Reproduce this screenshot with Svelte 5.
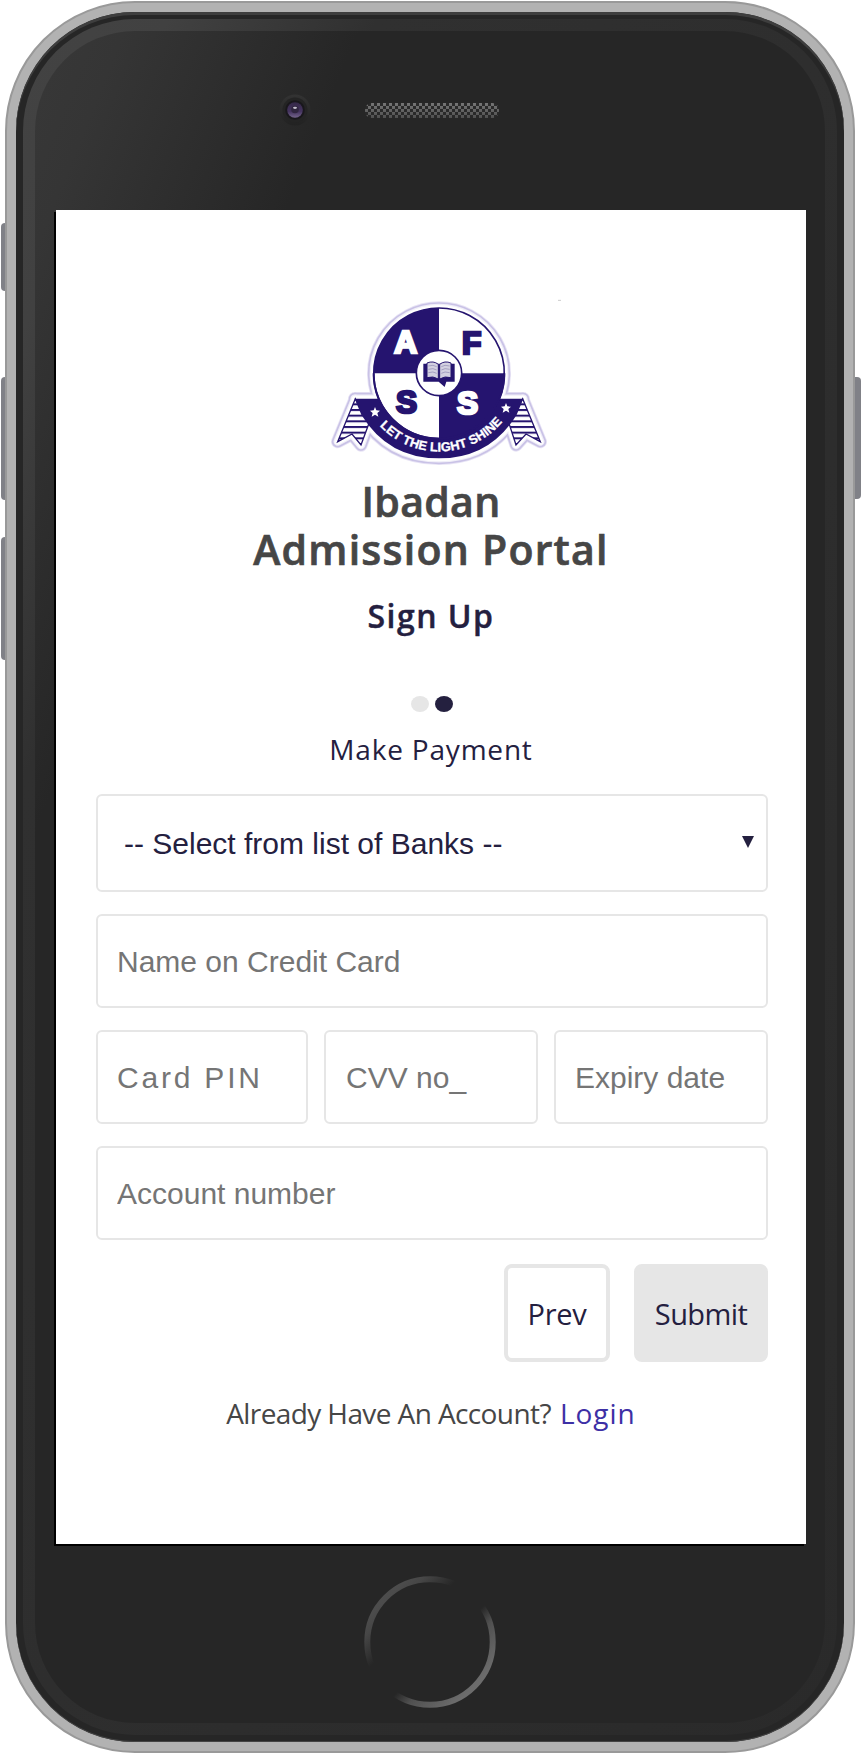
<script>
  const banks = ['-- Select from list of Banks --'];
  const sideKeys = [
    { side: 'left', top: 223, height: 68 },
    { side: 'left', top: 377, height: 123 },
    { side: 'left', top: 537, height: 123 },
    { side: 'right', top: 377, height: 122 }
  ];
</script>

<div class="device">
  {#each sideKeys as key}
    <span class="key {key.side}" style="top:{key.top}px;height:{key.height}px"></span>
  {/each}
  <div class="case">
    <div class="rim">
      <div class="ring">
        <div class="face">
          <div class="top-bar">
            <svg width="32" height="32" viewBox="0 0 32 32" class="camera">
              <defs>
                <linearGradient id="cam" x1="0" y1="0" x2="0" y2="1">
                  <stop offset="0" stop-color="#333" />
                  <stop offset="1" stop-color="#222" />
                </linearGradient>
                <linearGradient id="lens" x1="0" y1="0" x2="0" y2="1">
                  <stop offset="0" stop-color="#352848" />
                  <stop offset="0.6" stop-color="#45345f" />
                  <stop offset="1" stop-color="#75658c" />
                </linearGradient>
              </defs>
              <circle cx="16" cy="16" r="15.5" fill="url(#cam)" />
              <circle cx="16" cy="16" r="12.5" fill="#242424" />
              <circle cx="16" cy="16" r="9.8" fill="#19171c" />
              <circle cx="16" cy="16" r="7.8" fill="url(#lens)" />
              <circle cx="16" cy="15.5" r="3.8" fill="#30263f" />
              <ellipse cx="16" cy="13.8" rx="2" ry="1.1" fill="#c5bfcd" />
            </svg>
            <svg width="134" height="15" viewBox="0 0 134 15" class="speaker">
              <defs>
                <pattern id="mesh" width="6" height="6" patternUnits="userSpaceOnUse">
                  <rect width="6" height="6" fill="#2b2b2b" />
                  <rect width="3" height="3" fill="#7a7a7a" />
                  <rect x="3" y="3" width="3" height="3" fill="#7a7a7a" />
                </pattern>
                <linearGradient id="meshFade" x1="0" y1="0" x2="0" y2="1">
                  <stop offset="0" stop-color="#262626" stop-opacity="0.05" />
                  <stop offset="1" stop-color="#262626" stop-opacity="0.5" />
                </linearGradient>
              </defs>
              <rect width="134" height="15" rx="7" fill="url(#mesh)" />
              <rect width="134" height="15" rx="7" fill="url(#meshFade)" />
            </svg>
          </div>

          <main class="screen">
            <svg class="logo" width="240" height="180" viewBox="0 0 720 540">
              <defs>
                <path id="disc" d="M357 54a196 196 0 1 0 0.1 0z" />
                <path id="band" d="M104 326H190Q240 440 357 446Q474 440 524 326H610L590 374Q510 505 357 505Q204 505 124 374z" />
                <path id="tailL" d="M106 326L53 455L96 432L123 465L147 400z" />
                <path id="tailR" d="M608 326L661 455L618 432L588 465L567 400z" />
                <path id="motto" d="M131 337A247 247 0 0 0 583 337" />
                <pattern id="stripes" width="20" height="17" patternUnits="userSpaceOnUse">
                  <rect width="20" height="17" fill="#fff" />
                  <rect width="20" height="6" fill="#25146f" />
                </pattern>
                <g id="outline">
                  <use href="#disc" /><use href="#band" /><use href="#tailL" /><use href="#tailR" />
                </g>
                <path id="star" d="M0-15L4-5L15-4L7 3L10 14L0 8L-10 14L-7 3L-15-4L-4-5z" />
              </defs>
              <use href="#outline" fill="none" stroke="#e8e4f5" stroke-width="40" stroke-linejoin="round" />
              <use href="#outline" fill="none" stroke="#c9c2e6" stroke-width="35" stroke-linejoin="round" />
              <use href="#outline" fill="#f0eef8" stroke="#f0eef8" stroke-width="25" stroke-linejoin="round" />
              <use href="#outline" fill="#fff" stroke="#fff" stroke-width="18" stroke-linejoin="round" />
              <use href="#tailL" fill="url(#stripes)" stroke="#25146f" stroke-width="4" />
              <use href="#tailR" fill="url(#stripes)" stroke="#25146f" stroke-width="4" />
              <use href="#band" fill="#25146f" />
              <use href="#disc" fill="#fff" stroke="#25146f" stroke-width="5" />
              <path d="M357 250V54A196 196 0 0 0 161 250z" fill="#25146f" />
              <path d="M357 250V446A196 196 0 0 0 553 250z" fill="#25146f" />
              <path d="M161 250A196 196 0 0 0 553 250" fill="none" stroke="#25146f" stroke-width="6" />
              <g class="letters">
                <text x="257" y="189" fill="#fff" stroke="#fff">A</text>
                <text x="455" y="192" fill="#25146f" stroke="#25146f">F</text>
                <text x="260" y="369" fill="#25146f" stroke="#25146f">S</text>
                <text x="443" y="372" fill="#fff" stroke="#fff">S</text>
              </g>
              <circle cx="357" cy="249" r="68" fill="#fff" stroke="#25146f" stroke-width="5" />
              <path d="M310 221H404V275H379L374 291L356 275H310z" fill="#25146f" />
              <path d="M321 219Q340 211 355 223V267Q339 257 321 263zM393 219Q374 211 359 223V267Q375 257 393 263z" fill="#d3d0e0" stroke="#25146f" stroke-width="3" />
              <path d="M325 228Q340 223 350 230M325 238Q340 233 350 240M325 248Q340 243 350 250M389 228Q374 223 364 230M389 238Q374 233 364 240M389 248Q374 243 364 250" fill="none" stroke="#8d87b0" stroke-width="2" />
              <use href="#star" x="165" y="366" fill="#fff" />
              <use href="#star" x="558" y="354" fill="#fff" />
              <text class="motto"><textPath href="#motto" startOffset="51.5%" text-anchor="middle" textLength="416">LET THE LIGHT SHINE</textPath></text>
              <path d="M714 31H723" stroke="#ccc" stroke-width="3" />
            </svg>

            <h1>Ibadan<br /><span>Admission Portal</span></h1>
            <h2>Sign Up</h2>
            <div class="steps"><i></i><i class="active"></i></div>
            <h3>Make Payment</h3>

            <form onsubmit={(e) => e.preventDefault()}>
              <div class="bank">
                <select aria-label="Bank">
                  {#each banks as bank}<option>{bank}</option>{/each}
                </select>
                <svg width="12" height="12" viewBox="0 0 12 12"><path d="M0 0H12L6 12z" fill="#24203f" /></svg>
              </div>
              <input placeholder="Name on Credit Card" />
              <div class="card-row">
                <input class="pin" placeholder="Card PIN" />
                <input class="cvv" placeholder="CVV no_" />
                <input placeholder="Expiry date" />
              </div>
              <input placeholder="Account number" />
              <div class="actions">
                <button type="button" class="prev">Prev</button>
                <button class="submit">Submit</button>
              </div>
            </form>
            <p><span>Already Have An Account?</span><a href="#login">Login</a></p>
          </main>

          <div class="bottom-bar">
            <svg width="132" height="132" viewBox="0 0 132 132">
              <defs>
                <linearGradient id="home" x1="0" y1="0" x2="1" y2="1">
                  <stop offset="0.15" stop-color="#4c4c4c" />
                  <stop offset="0.22" stop-color="#464646" />
                  <stop offset="0.36" stop-color="#262626" />
                  <stop offset="0.57" stop-color="#262626" />
                  <stop offset="0.66" stop-color="#505050" />
                  <stop offset="0.85" stop-color="#6c6c6c" />
                </linearGradient>
              </defs>
              <circle cx="66" cy="66" r="62.7" fill="none" stroke="url(#home)" stroke-width="6" />
            </svg>
          </div>
        </div>
      </div>
    </div>
  </div>
</div>

<style>
  :global(body) { background: #fff; }
  * { box-sizing: border-box; }
  .device { position: relative; width: 862px; height: 1754px; padding: 1px 7px 1px 5px; overflow: hidden; }
  .key { position: absolute; width: 8px; background: #808187; }
  .key.left { left: 1px; border-radius: 4px 0 0 4px; }
  .key.right { left: 853px; border-radius: 0 4px 4px 0; }
  .case {
    position: relative; height: 1752px; padding: 9px; border: 2px solid #999;
    border-radius: 130px; background: #b2b2b2;
  }
  .rim {
    height: 1730px; padding: 7px; border-radius: 119px; background: #262626;
    box-shadow: inset 0 3px 0 #3e3e3e, inset 0 -1px 0 #444;
  }
  .ring {
    height: 1716px; padding: 12px; border-radius: 112px;
    background: linear-gradient(115deg, #434343 0, #414141 9%, #303030 22%, #2e2e2e 50%, #2a2a2a 100%);
  }
  .face {
    display: flex; flex-direction: column; height: 1692px; border-radius: 100px;
    background: linear-gradient(112deg, #383838 0, #353535 6%, #262626 22%);
    padding: 0 19px;
  }
  .top-bar { display: flex; flex: 0 0 179px; padding-left: 225px; }
  .camera { margin-top: 63px; }
  .speaker { margin: 72px 0 0 54px; }
  .screen {
    display: flex; flex-direction: column; align-items: center; flex: 0 0 1334px; width: 750px;
    margin-left: 2px; padding-top: 80px; background: #fff; box-shadow: -2px 2px 0 #000;
    font-family: "Open Sans", "Noto Sans", sans-serif;
  }
  .logo { flex: none; margin-left: 18px; overflow: visible; }
  .letters {
    font: 900 95px "Liberation Sans", Arial, sans-serif; text-anchor: middle;
    stroke-width: 8; stroke-linejoin: miter;
  }
  .motto { font: bold 38px "Liberation Sans", Arial, sans-serif; fill: #fff; stroke: #fff; stroke-width: 1; }
  h1, h2, h3, p { margin: 0; text-align: center; }
  h1 {
    margin-top: 7px; font-size: 41px; line-height: 48px; font-weight: 600; letter-spacing: 0.3px;
    color: #464646; -webkit-text-stroke: 0.7px #464646;
  }
  h1 span { letter-spacing: 1.25px; }
  h2 {
    margin-top: 23px; font-size: 32px; line-height: 40px; font-weight: 600; letter-spacing: 1.5px;
    color: #24203f; -webkit-text-stroke: 0.4px #24203f;
  }
  .steps { display: flex; gap: 6px; margin-top: 60px; margin-left: 1px; }
  .steps i { width: 18px; height: 16px; border-radius: 9px / 8px; background: #e6e6e6; }
  .steps .active { background: #24203f; }
  h3 { margin-top: 19px; font-size: 28px; line-height: 36px; font-weight: 400; letter-spacing: 0.8px; color: #24203f; }
  form { display: flex; flex-direction: column; gap: 22px; width: 672px; margin-top: 27px; margin-left: 2px; }
  input, select {
    width: 100%; min-width: 0; height: 94px; margin: 0; padding: 1px 19px 0; border: 2px solid #e6e6e6; border-radius: 6px;
    background: #fff; font: 30px "Liberation Sans", Arial, sans-serif; color: #24203f; outline: 0;
  }
  input::placeholder { color: #757575; opacity: 1; }
  .bank { display: flex; position: relative; }
  .bank select { appearance: none; height: 98px; padding: 0 26px; }
  .bank svg { position: absolute; right: 14px; top: 42px; }
  .card-row { display: grid; grid-template-columns: 212px 214px 214px; gap: 16px; }
  .pin { letter-spacing: 2.8px; }
  .cvv { padding-left: 20px; }
  .actions { display: flex; justify-content: flex-end; gap: 24px; margin-top: 2px; }
  button {
    height: 98px; padding: 0; border: 4px solid #e6e6e6; border-radius: 8px; color: #24203f;
    font: 29px "Open Sans", "Noto Sans", sans-serif; letter-spacing: -0.6px;
  }
  .prev { width: 106px; background: #fff; letter-spacing: -0.3px; }
  .submit { width: 134px; background: #e6e6e6; }
  p { display: flex; gap: 9px; margin-top: 31px; font-size: 28px; line-height: 40px; color: #464646; }
  p span { letter-spacing: -0.6px; }
  a { color: #3d30a5; text-decoration: none; letter-spacing: 1px; }
  .bottom-bar { display: flex; justify-content: center; padding-top: 32px; }
</style>
